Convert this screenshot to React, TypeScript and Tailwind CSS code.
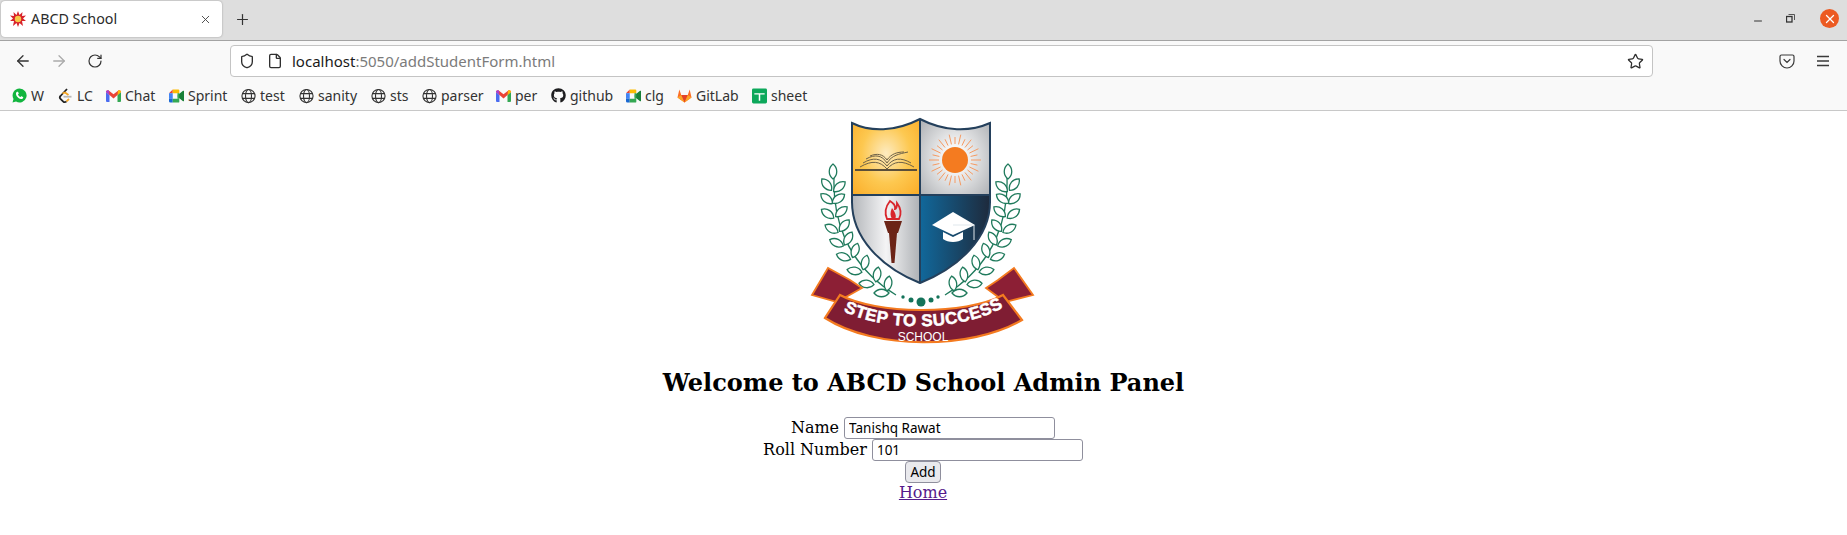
import React from "react";
import { ArrowLeft, ArrowRight, RotateCw, Shield, File, Star, Minus, X, Plus } from "lucide-react";
import { FaGithub } from "react-icons/fa";

const uiFont = "font-['Noto_Sans',sans-serif]";

const Favicon = () => (
  <svg width="16" height="16" viewBox="0 0 16 16">
    <polygon
      points="8,0 9.500,4 12.500,1 12,5 16,4.500 13,7.500 16,10 12,10 13,15 9.500,12 8,16 6.500,12 3,15 4,10 0,10 3,7.500 0,4.500 4,5 3.500,1 6.500,4"
      fill="#d8232a"
    />
    <circle cx="8" cy="8" r="3.200" fill="#f7c948" />
  </svg>
);

const WhatsApp = () => (
  <svg width="15" height="15" viewBox="0 0 15 15">
    <path d="M7.500 .5A7 7 0 0 0 1.500 11L.5 14.500 4 13.500A7 7 0 1 0 7.500 .5Z" fill="#12b53f" />
    <path
      d="M5.300 3.800C4.500 4 3.800 5 4 6.200C4.400 8.500 6.500 10.600 8.800 11C10 11.200 11 10.500 11.200 9.700C11.300 9.300 11.200 9.100 10.900 8.900L9.700 8.300C9.400 8.200 9.200 8.300 9 8.500L8.500 9.100C7.400 8.600 6.400 7.600 5.900 6.500L6.500 6C6.700 5.800 6.800 5.600 6.700 5.300L6.100 4.100C5.900 3.800 5.700 3.700 5.300 3.800Z"
      fill="#fff"
    />
  </svg>
);

const Gmail = () => (
  <svg width="15" height="12" viewBox="0 0 15 12">
    <path d="M0 2v9a1 1 0 0 0 1 1h2.500V5z" fill="#4a6cf0" />
    <path d="M15 2v9a1 1 0 0 1-1 1h-2.500V5z" fill="#34a853" />
    <path d="M0 2C0 .5 1.600 -.4 3 .7L7.500 4.200 12 .7C13.400 -.4 15 .5 15 2L11.500 5 7.500 8.400 3.500 5z" fill="#ea4335" />
    <path d="M12 .7C13.400 -.4 15 .5 15 2L11.500 5z" fill="#fbbc04" />
    <path d="M0 2C0 .5 1.600 -.4 3 .7L3.500 5z" fill="#a83fd0" />
  </svg>
);

const Meet = () => (
  <svg width="16" height="14" viewBox="0 0 16 14">
    <path d="M0 4 4 0V4Z" fill="#ea4335" />
    <path d="M4 0H10A1 1 0 0 1 11 1V4H4Z" fill="#fbbc04" />
    <path d="M0 4H4V10H0Z" fill="#4285f4" />
    <path d="M0 10H4V14H1.500A1.500 1.500 0 0 1 0 12.500Z" fill="#1967d2" />
    <path d="M4 10H11V13A1 1 0 0 1 10 14H4Z" fill="#34a853" />
    <path d="M9 7 11 4.500 15 1.500A.6 .6 0 0 1 16 2V12A.6 .6 0 0 1 15 12.500L11 9.500Z" fill="#188038" />
    <path d="M9 4H11V10H9Z" fill="#34a853" />
  </svg>
);

const Globe = () => (
  <svg width="16" height="16" viewBox="0 0 16 16" fill="none" stroke="#333" strokeWidth="1.200">
    <circle cx="8" cy="8" r="7" />
    <ellipse cx="8" cy="8" rx="3.200" ry="7" />
    <path d="M1.300 5.500h13.400M1.300 10.500h13.400" />
  </svg>
);

const LeetCode = () => (
  <svg width="15" height="16" viewBox="0 0 15 16" fill="none" strokeWidth="1.800">
    <path d="M9 1 2.500 8a2 2 0 0 0 0 2.800l2.500 2.500a2.500 2.500 0 0 0 3.500 0" stroke="#222" />
    <path d="M5.500 8.700h8" stroke="#b8b8b8" />
    <path d="M4.500 5.500 7 4.500l3.500 2.500" stroke="#f5a623" />
    <path d="M8.500 13.300 11 11" stroke="#f5a623" />
  </svg>
);

const GitLab = () => (
  <svg width="16" height="15" viewBox="0 0 16 15">
    <path d="M8 15 .5 9.500 2.500 1l2 6h7l2-6 2 8.500z" fill="#fc6d26" />
    <path d="M8 15 4.500 7h7z" fill="#e24329" />
    <path d="M8 15 .5 9.500 4.500 7z" fill="#fca326" />
    <path d="M8 15 15.500 9.500 11.500 7z" fill="#fca326" />
  </svg>
);

const Sheet = () => (
  <svg width="16" height="16" viewBox="0 0 16 16">
    <rect width="16" height="16" rx="1.500" fill="#0da85b" />
    <path d="M2.500 5h11v1.500H8.800V13H7.200V6.500H2.500z" fill="#fff" />
  </svg>
);

const Pocket = () => (
  <svg width="16" height="15" viewBox="0 0 16 15" fill="none" stroke="#3a3a3a" strokeWidth="1.200">
    <path d="M2.500 1h11A1.500 1.500 0 0 1 15 2.500V7a7 7 0 0 1-14 0V2.500A1.500 1.500 0 0 1 2.500 1z" />
    <path d="M5 5.500 8 8.500l3-3" strokeLinecap="round" />
  </svg>
);

const bookmarks: { label: string; icon: React.ReactNode; width: number }[] = [
  { label: "W", icon: <WhatsApp />, width: 13 },
  { label: "LC", icon: <LeetCode />, width: 15 },
  { label: "Chat", icon: <Gmail />, width: 30 },
  { label: "Sprint", icon: <Meet />, width: 39 },
  { label: "test", icon: <Globe />, width: 25 },
  { label: "sanity", icon: <Globe />, width: 39 },
  { label: "sts", icon: <Globe />, width: 18 },
  { label: "parser", icon: <Globe />, width: 41 },
  { label: "per", icon: <Gmail />, width: 22 },
  { label: "github", icon: <FaGithub size={15} className="text-[#1d1d1f]" />, width: 42 },
  { label: "clg", icon: <Meet />, width: 18 },
  { label: "GitLab", icon: <GitLab />, width: 42 },
  { label: "sheet", icon: <Sheet />, width: 37 },
];

// x, y, rotation of each laurel leaf on the left branch
const leaves = [
  [33, 60, 0],
  [39, 75, 50],
  [27, 73, -40],
  [38, 87, 55],
  [27, 87, -50],
  [41, 100, 50],
  [28, 102, -55],
  [44, 114, 40],
  [32, 117, -60],
  [48, 127, 30],
  [37, 131, -65],
  [55, 139, 20],
  [44, 145, -70],
  [65, 151, 15],
  [55, 159, -80],
  [77, 163, 10],
  [67, 172, -85],
  [88, 172, 10],
  [82, 181, -90],
];

const Laurel = () => (
  <g fill="#fff" stroke="#1f7a5c" strokeWidth="1.300">
    <path d="M34 66C33 100 42 150 96 183" fill="none" />
    {leaves.map(([x, y, r], i) => (
      <path
        key={i}
        d="M0 -8C5 -4 5 3 0 7C-5 3 -5 -4 0 -8Z"
        transform={`translate(${x} ${y}) rotate(${r})`}
      />
    ))}
  </g>
);

const sunRays = Array.from({ length: 28 }, (_, i) => (i * Math.PI * 2) / 28);

// school crest, drawn in the coordinates of the 250x240 box it sits in
const Crest = () => (
  <svg width="250" height="240" viewBox="0 0 250 240" className="block shrink-0">
    <defs>
      <radialGradient id="gold" cx="0.5" cy="0.5" r="0.65">
        <stop offset="0" stopColor="#fdebc0" />
        <stop offset="0.55" stopColor="#fdc850" />
        <stop offset="1" stopColor="#fbb02d" />
      </radialGradient>
      <radialGradient id="sky" cx="0.5" cy="0.55" r="0.7">
        <stop offset="0.2" stopColor="#f7f7f7" />
        <stop offset="1" stopColor="#a9acb0" />
      </radialGradient>
      <linearGradient id="silver" x1="0" y1="0" x2="1" y2="0">
        <stop offset="0" stopColor="#b3b6ba" />
        <stop offset="0.5" stopColor="#f4f4f5" />
        <stop offset="1" stopColor="#aeb1b5" />
      </linearGradient>
      <linearGradient id="blue" x1="0" y1="0" x2="1" y2="0">
        <stop offset="0" stopColor="#11689b" />
        <stop offset="1" stopColor="#1e2a3c" />
      </linearGradient>
      <clipPath id="shield">
        <path d="M52 11C70 20 95 20 120 7C145 20 170 20 190 11V90C190 125 160 155 120 171C80 155 52 125 52 90Z" />
      </clipPath>
    </defs>
    <Laurel />
    <g transform="matrix(-1 0 0 1 241 0)">
      <Laurel />
    </g>
    <g clipPath="url(#shield)">
      <rect x="52" y="0" width="68" height="83" fill="url(#gold)" />
      <rect x="120" y="0" width="70" height="83" fill="url(#sky)" />
      <rect x="52" y="83" width="68" height="90" fill="url(#silver)" />
      <rect x="120" y="83" width="70" height="90" fill="url(#blue)" />
    </g>
    {/* book */}
    <g fill="none" stroke="#6d6147" strokeWidth="1">
      <path d="M55 58H117" strokeWidth="1.800" stroke="#5b4f3a" />
      <path d="M60 55C72 48 80 49 87 57C94 49 102 48 114 55" />
      <path d="M63 51C73 45 81 46 87 54C93 46 101 45 111 51" />
      <path d="M66 47C75 42 82 43 87 51C92 43 99 42 108 40" />
      <path d="M70 44C77 41 83 42 87 48C91 42 97 40 104 40" />
    </g>
    {/* sun */}
    {sunRays.map((a, i) => (
      <line
        key={i}
        x1={155 + Math.cos(a) * 16}
        y1={48 + Math.sin(a) * 16}
        x2={155 + Math.cos(a) * (i % 2 ? 23 : 26)}
        y2={48 + Math.sin(a) * (i % 2 ? 23 : 26)}
        stroke="#f59a62"
        strokeWidth="1"
      />
    ))}
    <circle cx="155" cy="48" r="13" fill="#f47b20" />
    {/* torch */}
    <path
      d="M90 89C86 94 84 100 87 107H99C102 101 100 95 97 91C97 95 96 97 95 97C96 93 93 91 90 89Z"
      fill="none"
      stroke="#d8262c"
      strokeWidth="1.800"
    />
    <path d="M92 96C90 100 90 104 92 107H95C97 104 95 100 92 96Z" fill="#d8262c" />
    <path d="M84 109H102L98 121H88Z" fill="#6b2417" />
    <path d="M89 121H97L94.500 151H91.500Z" fill="#6b2417" />
    {/* cap */}
    <path d="M153 100 175 113 153 123 132 113Z" fill="#fff" />
    <path d="M143 120 153 125 163 120V127C158 131 148 131 143 127Z" fill="#fff" />
    <path d="M153 113H174V128" fill="none" stroke="#dfe7ec" strokeWidth="1" />
    {/* shield outline */}
    <path
      d="M52 11C70 20 95 20 120 7C145 20 170 20 190 11V90C190 125 160 155 120 171C80 155 52 125 52 90Z M120 7V171 M52 83H190"
      fill="none"
      stroke="#24405c"
      strokeWidth="2"
    />
    {/* dots */}
    <g fill="#14735a">
      <circle cx="121" cy="190" r="4.500" />
      <circle cx="111" cy="188" r="2.500" />
      <circle cx="131" cy="188" r="2.500" />
      <circle cx="103" cy="185" r="1.700" />
      <circle cx="138" cy="185" r="1.700" />
    </g>
    {/* ribbon */}
    <path d="M28 156 12 183 37 190 62 176 50 168Z" fill="#8c1f35" stroke="#f47b20" strokeWidth="1.800" />
    <path d="M214 156 233 183 205 190 186 176 198 168Z" fill="#8c1f35" stroke="#f47b20" strokeWidth="1.800" />
    <path
      d="M40 183C75 202 165 204 203 183L222 208C170 238 75 238 25 206Z"
      fill="#7f1d33"
      stroke="#f47b20"
      strokeWidth="2.200"
    />
    <path id="ribbon-line" d="M43 199C85 220 160 220 204 195" fill="none" />
    <text
      fontFamily="'Liberation Sans', sans-serif"
      fontWeight="700"
      fontSize="17"
      letterSpacing="0.400"
      fill="#fff"
      stroke="#fff"
      strokeWidth="0.500"
    >
      <textPath href="#ribbon-line" startOffset="50%" textAnchor="middle">
        STEP TO SUCCESS
      </textPath>
    </text>
    <text x="123" y="229" textAnchor="middle" fontFamily="'Liberation Sans', sans-serif" fontSize="12" fill="#fff">
      SCHOOL
    </text>
  </svg>
);

const App = () => {
  return (
    <div className="h-[535px] w-full flex flex-col bg-white overflow-hidden">
      {/* tab strip */}
      <div className={`${uiFont} h-[41px] flex items-start bg-[#dedede] border-b border-[#a3a3a3] shrink-0`}>
        <div className="ml-[1px] mt-[1px] h-[36px] w-[221px] flex items-center bg-white rounded-[4px] shadow-[0_0_2px_rgba(0,0,0,0.35)] pl-[9px] pr-[10px]">
          <Favicon />
          <span className="ml-[5px] text-[14.300px] text-[#2b2b2b]">ABCD School</span>
          <X size={13} strokeWidth={1.700} className="ml-auto text-[#444]" />
        </div>
        <Plus size={17} strokeWidth={1.700} className="ml-[12px] mt-[11px] text-[#333]" />
        <div className="ml-auto flex items-center mt-[9px] pr-[8px]">
          <Minus size={12} className="text-[#333] mt-[4px]" strokeWidth={2} />
          <svg width="9" height="9" viewBox="0 0 9 9" fill="none" stroke="#333" className="ml-[22px]">
            <rect x="0.500" y="2.500" width="5.500" height="5.500" strokeWidth="1.300" />
            <path d="M2.500 .5H8.500V6" strokeWidth="0.800" />
          </svg>
          <div className="ml-[25px] w-[19px] h-[19px] rounded-full bg-[#ec5a22] flex items-center justify-center">
            <X size={14} strokeWidth={2.200} className="text-white" />
          </div>
        </div>
      </div>

      {/* nav bar */}
      <div className={`${uiFont} h-[40px] flex items-center bg-[#f9f9f9] shrink-0`}>
        <ArrowLeft size={18} strokeWidth={1.700} className="ml-[14px] text-[#333]" />
        <ArrowRight size={18} strokeWidth={1.700} className="ml-[18px] text-[#aaa]" />
        <RotateCw size={16} strokeWidth={1.800} className="ml-[19px] text-[#333]" />
        <div className="ml-[127px] w-[1423px] h-[32px] flex items-center bg-white border border-[#c4c4c4] rounded-[4px] pl-[8px] pr-[8px]">
          <Shield size={16} strokeWidth={2} className="text-[#2f2f2f]" />
          <File size={16} strokeWidth={2} className="ml-[12px] text-[#2f2f2f]" />
          <span className="ml-[9px] text-[15px] text-[#1a1a1a]">
            localhost<span className="text-[#7b7b7b]">:5050/addStudentForm.html</span>
          </span>
          <Star size={17} strokeWidth={1.800} className="ml-auto text-[#2f2f2f]" />
        </div>
        <div className="ml-auto flex items-center gap-[20px] pr-[16px]">
          <Pocket />
          <svg width="16" height="12" viewBox="0 0 16 12" stroke="#3a3a3a" strokeWidth="1.300">
            <path d="M2 1.500h12M2 6h12M2 10.500h12" />
          </svg>
        </div>
      </div>

      {/* bookmarks */}
      <div className={`${uiFont} h-[30px] flex items-center gap-[14px] bg-[#f9f9f9] border-b border-[#c8c8c8] pl-[12px] shrink-0`}>
        {bookmarks.map((b) => (
          <div key={b.label} className="flex items-center gap-[4px]">
            <span className="w-[15px] flex justify-center">{b.icon}</span>
            <span className="text-[14px] text-[#333] whitespace-nowrap" style={{ width: b.width }}>
              {b.label}
            </span>
          </div>
        ))}
      </div>

      {/* page */}
      <main className="flex-1 flex flex-col items-center font-['DejaVu_Serif',serif] text-black text-[16px]">
        <div className="ml-[3px] pt-[1px]">
          <Crest />
        </div>
        <h1 className="mt-[17px] text-[24px] leading-[28px] font-bold">Welcome to ABCD School Admin Panel</h1>
        <form className="mt-[20px] mr-[1px] flex flex-col items-center">
          <label className="h-[22px] flex items-center gap-[5px]">
            Name
            <input
              readOnly
              value="Tanishq Rawat"
              className="w-[211px] h-[22px] px-[4px] border border-[#8f8f9d] rounded-[3px] text-[13.500px] font-['Noto_Sans',sans-serif]"
            />
          </label>
          <label className="h-[22px] flex items-center gap-[5px]">
            Roll Number
            <input
              readOnly
              value="101"
              className="w-[211px] h-[22px] px-[4px] border border-[#8f8f9d] rounded-[3px] text-[13.500px] font-['Noto_Sans',sans-serif]"
            />
          </label>
          <button
            type="button"
            className="h-[22px] w-[36px] bg-[#e9e9ed] border border-[#8f8f9d] rounded-[4px] text-[13.500px] font-['Noto_Sans',sans-serif] text-black"
          >
            Add
          </button>
          <a href="#home" className="text-[#551a8b] underline leading-[19px]">
            Home
          </a>
        </form>
      </main>
    </div>
  );
};

export default App;
